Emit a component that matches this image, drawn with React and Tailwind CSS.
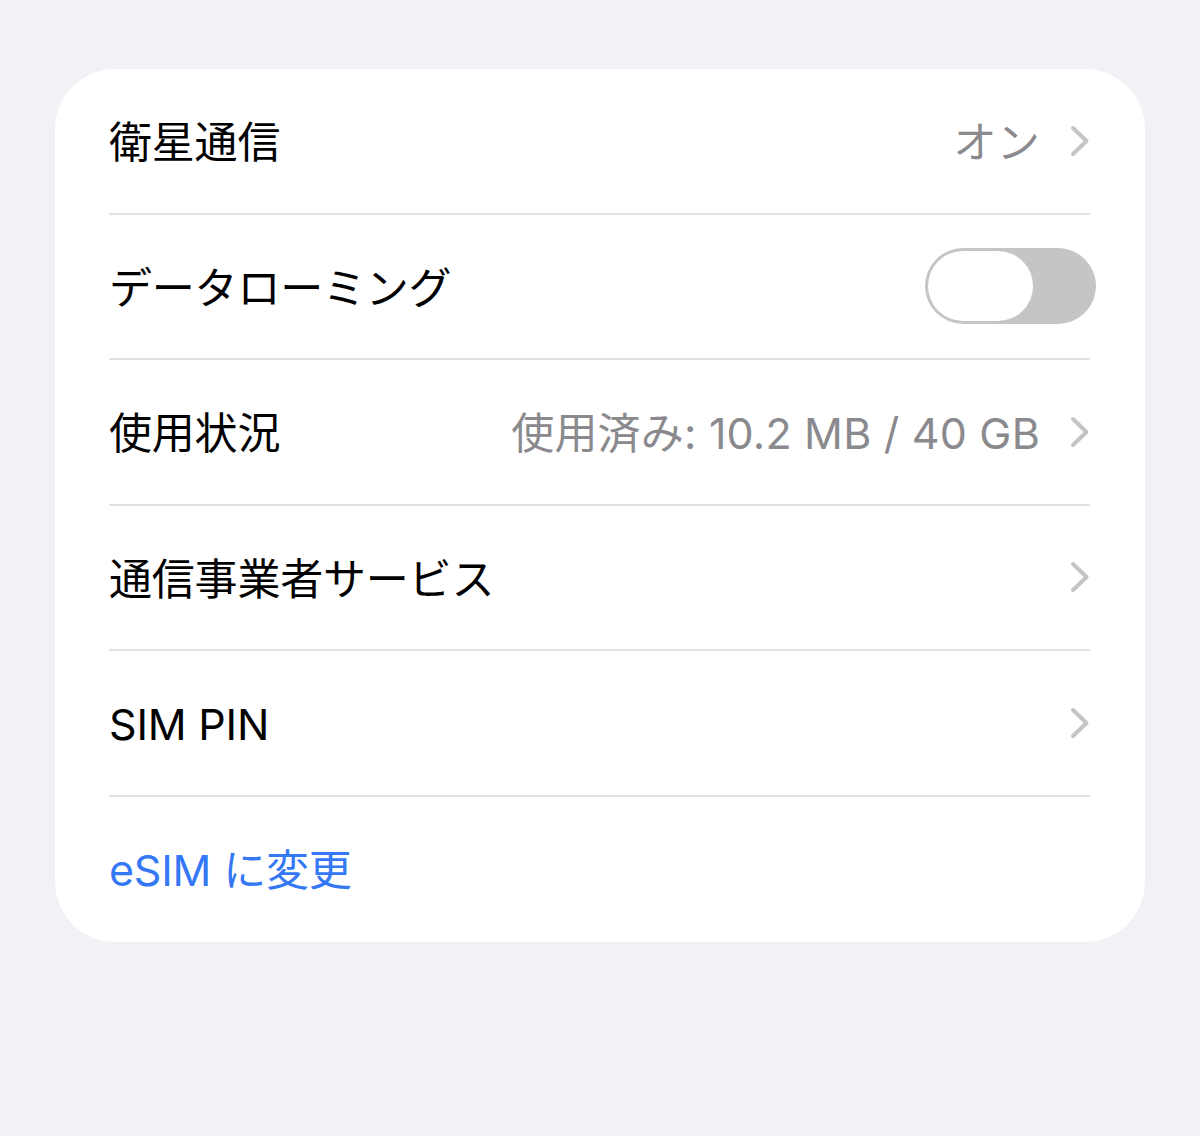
import React from 'react';

const font = { fontFamily: 'Inter, "Noto Sans CJK JP", sans-serif' };

const Chevron = () => (
  <svg width="20" height="32" viewBox="0 0 20 32" fill="none" className="shrink-0">
    <path d="M3 3 L16.5 16 L3 29" stroke="#c4c4c7" strokeWidth="4" strokeLinecap="round" strokeLinejoin="round" />
  </svg>
);

const Toggle = () => (
  <div className="w-[171px] h-[76px] rounded-full bg-[#c5c5c7] p-[3px] flex items-center -mr-[6px]">
    <div className="w-[105px] h-[70px] rounded-full bg-white" />
  </div>
);

const Row = ({ label, value, chevron, toggle }) => (
  <div className="ml-[54px] mr-[55px] h-[145.5px] border-b-2 border-[#e2e2e6] flex items-center justify-between">
    <span className="text-[43px] text-black tracking-[-0.2px] pt-[3px]">{label}</span>
    <div className="flex items-center gap-[30px]">
      {value && <span className="text-[43px] text-[#8a8a8e] tracking-[0.2px] pt-[3px]">{value}</span>}
      {chevron && <Chevron />}
      {toggle && <Toggle />}
    </div>
  </div>
);

export default function App() {
  return (
    <div className="w-[1200px] h-[1136px] bg-[#f1f1f6] pt-[69px] px-[55px]" style={font}>
      <div className="bg-white rounded-[60px]">
        <Row label="衛星通信" value="オン" chevron />
        <Row label="データローミング" toggle />
        <Row label="使用状況" value="使用済み: 10.2 MB / 40 GB" chevron />
        <Row label="通信事業者サービス" chevron />
        <Row label="SIM PIN" chevron />
        <div className="ml-[54px] h-[145px] flex items-center">
          <span className="text-[43px] text-[#3478f6] tracking-[-0.2px] pt-[3px]">eSIM に変更</span>
        </div>
      </div>
    </div>
  );
}
